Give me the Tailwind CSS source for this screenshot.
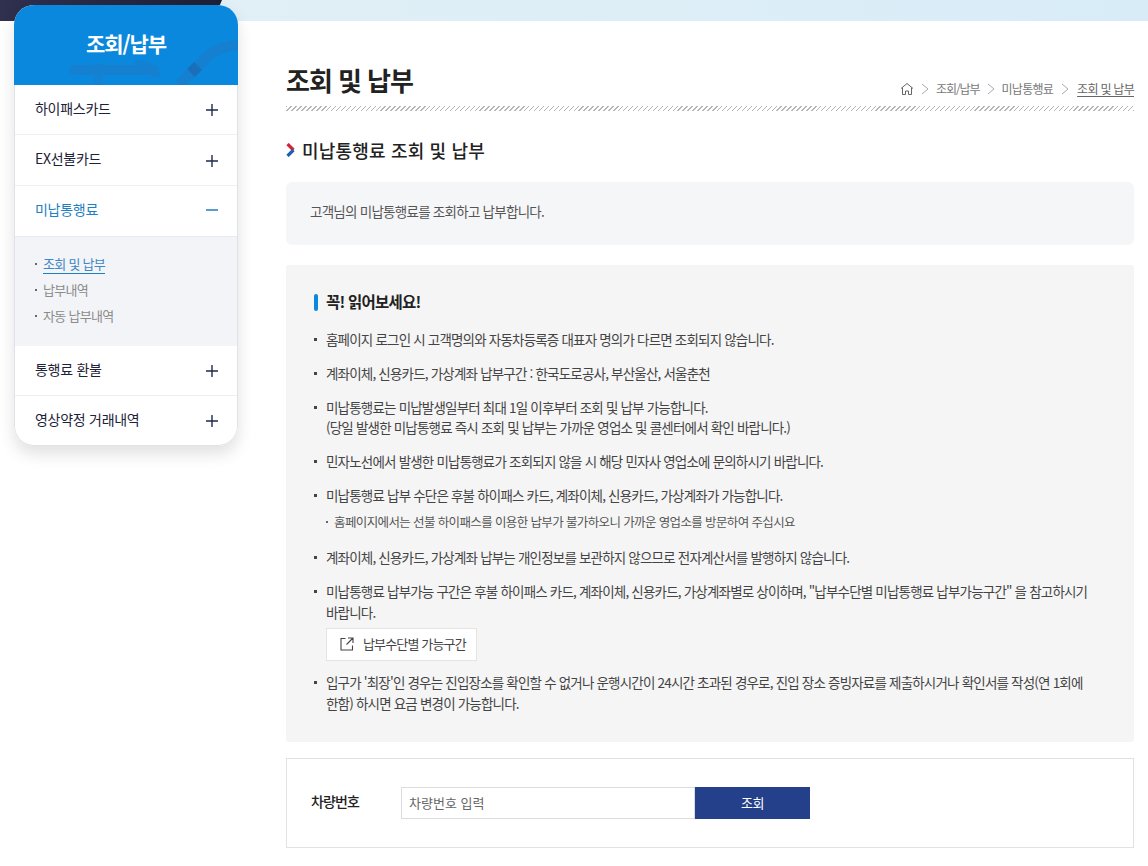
<!DOCTYPE html>
<html lang="ko">
<head>
  <meta charset="UTF-8">
  <title>조회 및 납부</title>
  <script src="https://cdn.jsdelivr.net/npm/@tailwindcss/browser@4"></script>
</head>
<body class="bg-white overflow-hidden font-['Noto_Sans_CJK_KR','Noto_Sans',sans-serif]">
  <div class="relative w-[1148px] h-[866px] overflow-hidden">
    <!-- top band -->
    <div class="absolute top-0 left-0 w-full h-[21px] bg-gradient-to-r from-[#e3f0f5] to-[#d8ecf8]"></div>
    <div class="absolute top-0 left-0 w-[222px] h-[21px] bg-gradient-to-r from-[#30304f] to-[#1d2036] [clip-path:polygon(0_0,100%_0,96%_100%,0_100%)]"></div>

    <div class="relative flex pl-[14px] pt-[5px]">
      <!-- side menu -->
      <aside class="w-[224px] h-[441px] shrink-0 rounded-[20px] bg-white shadow-[0_8px_16px_rgba(0,0,0,0.12)] overflow-hidden">
        <div class="relative h-[80px] bg-[#0a88dd] flex items-center justify-center overflow-hidden">
          <svg class="absolute left-0 top-[35px]" width="224" height="45" viewBox="0 0 224 45" fill="none" stroke="#1680d0">
            <path d="M60 30h80" stroke-width="10" stroke-linecap="round"/>
            <path d="M84 24v21M120 24c14 0 22 6 22 14" stroke-width="9" opacity="0.7"/>
            <path d="M165 45 195 15c8-6 16-9 29-10" stroke-width="11"/>
            <path d="M177 33l7-7" stroke="#1a6fb8" stroke-width="11"/>
          </svg>
          <span class="relative text-white text-[21px] font-bold tracking-[-0.05em] mt-[-2px]">조회/납부</span>
        </div>
        <div class="h-[361px] border-x border-b border-[#dfe2e6] rounded-b-[20px]">
          <div class="h-[50px] pl-[20px] pr-[19px] flex items-center justify-between border-b border-[#eceef0] text-[14px] text-[#1d2238] tracking-[-0.02em]">
            <span class="-mt-[3px]">하이패스카드</span>
            <svg width="12" height="12" viewBox="0 0 12 12" class="mt-px"><path d="M6 0v12M0 6h12" stroke="#1d2a4d" stroke-width="1.4"/></svg>
          </div>
          <div class="h-[51px] pl-[20px] pr-[19px] flex items-center justify-between border-b border-[#eceef0] text-[14px] text-[#1d2238] tracking-[-0.02em]">
            <span class="-mt-[3px]">EX선불카드</span>
            <svg width="12" height="12" viewBox="0 0 12 12" class="mt-[2px]"><path d="M6 0v12M0 6h12" stroke="#1d2a4d" stroke-width="1.4"/></svg>
          </div>
          <div class="h-[50px] pl-[20px] pr-[19px] flex items-center justify-between text-[14px] text-[#1f7fc0] tracking-[-0.02em]">
            <span class="-mt-[3px]">미납통행료</span>
            <svg width="12" height="12" viewBox="0 0 12 12" class="-mt-[2px]"><path d="M0 6h12" stroke="#1f7fc0" stroke-width="1.4"/></svg>
          </div>
          <ul class="h-[110px] bg-[#f2f4f7] border-t border-[#e8eaed] pt-[14px] pl-[20px] text-[13px] tracking-[-0.055em] text-[#8b8b8b]">
            <li class="h-[26px] flex items-center gap-[6px]">
              <span class="w-[2px] h-[2px] bg-[#666]"></span>
              <span class="text-[#3f87c5] border-b border-[#1f7fc0] leading-[18px]">조회 및 납부</span>
            </li>
            <li class="h-[26px] flex items-center gap-[6px]">
              <span class="w-[2px] h-[2px] bg-[#666]"></span>
              <span>납부내역</span>
            </li>
            <li class="h-[26px] flex items-center gap-[6px]">
              <span class="w-[2px] h-[2px] bg-[#666]"></span>
              <span>자동 납부내역</span>
            </li>
          </ul>
          <div class="h-[50px] pl-[20px] pr-[19px] flex items-center justify-between border-b border-[#eceef0] text-[14px] text-[#1d2238] tracking-[-0.02em]">
            <span class="-mt-[2px]">통행료 환불</span>
            <svg width="12" height="12" viewBox="0 0 12 12"><path d="M6 0v12M0 6h12" stroke="#1d2a4d" stroke-width="1.4"/></svg>
          </div>
          <div class="h-[49px] pl-[20px] pr-[19px] flex items-center justify-between text-[14px] text-[#1d2238] tracking-[-0.02em]">
            <span class="-mt-[2px]">영상약정 거래내역</span>
            <svg width="12" height="12" viewBox="0 0 12 12" class="mt-px"><path d="M6 0v12M0 6h12" stroke="#1d2a4d" stroke-width="1.4"/></svg>
          </div>
        </div>
      </aside>

      <!-- main -->
      <main class="w-[848px] ml-[48px] pt-[55px]">
        <div class="h-[51px] flex items-start justify-between bg-[repeating-linear-gradient(135deg,#b5b5b5_0,#b5b5b5_1px,transparent_1px,transparent_3.5px)] bg-[length:100%_5px] bg-bottom bg-no-repeat">
          <h1 class="text-[26px] leading-[40px] font-bold text-[#222] tracking-[-0.04em]">조회 및 납부</h1>
          <nav class="flex items-center text-[12px] text-[#777] tracking-[-0.06em] mt-[20px] h-[17px]">
            <svg width="14" height="14" viewBox="0 0 14 14" fill="none" stroke="#666" stroke-width="1"><path d="M1 6.5 7 1.5l6 5M2.5 5.5v7h3v-3.5h3v3.5h3v-7"/></svg>
            <svg class="mx-[7px]" width="8" height="12" viewBox="0 0 8 12" fill="none" stroke="#aaa"><path d="M1 1l6 5-6 5"/></svg>
            <span class="tracking-[-0.09em]">조회/납부</span>
            <svg class="mx-[7px]" width="8" height="12" viewBox="0 0 8 12" fill="none" stroke="#aaa"><path d="M1 1l6 5-6 5"/></svg>
            <span>미납통행료</span>
            <svg class="mx-[8px]" width="8" height="12" viewBox="0 0 8 12" fill="none" stroke="#aaa"><path d="M1 1l6 5-6 5"/></svg>
            <span class="underline underline-offset-2 text-[#666]">조회 및 납부</span>
          </nav>
        </div>

        <h2 class="flex items-center gap-[6px] mt-[25px] h-[28px] text-[18px] font-medium text-[#222] tracking-[0.01em]">
          <svg width="10" height="14" viewBox="0 0 10 14" fill="none" stroke-width="3.2"><path d="M1.5 1l6 6" stroke="#d0263c"/><path d="M7.5 7l-6 6" stroke="#1e5fae"/></svg>
          미납통행료 조회 및 납부
        </h2>

        <div class="mt-[18px] h-[63px] rounded-[6px] bg-[#f5f6f8] pl-[24px] pb-[5px] flex items-center text-[13.5px] text-[#555] tracking-[-0.055em]">고객님의 미납통행료를 조회하고 납부합니다.</div>

        <section class="mt-[20px] h-[477px] rounded-[3px] bg-[#f5f5f5] pt-[27px] pl-[28px] pr-[44px]">
          <h3 class="flex items-center gap-[8px] h-[20px] text-[15.5px] font-bold text-[#222] tracking-[-0.05em]">
            <span class="w-[4px] h-[17px] rounded-full bg-[#0a88dd]"></span>꼭! 읽어보세요!
          </h3>
          <ul class="mt-[17px] text-[13.5px] leading-[20px] text-[#444] tracking-[-0.06em]">
            <li class="flex gap-[9px]"><span class="w-[3px] h-[3px] bg-[#444] mt-[9px] shrink-0"></span><p>홈페이지 로그인 시 고객명의와 자동차등록증 대표자 명의가 다르면 조회되지 않습니다.</p></li>
            <li class="flex gap-[9px] mt-[14px]"><span class="w-[3px] h-[3px] bg-[#444] mt-[9px] shrink-0"></span><p>계좌이체, 신용카드, 가상계좌 납부구간 : 한국도로공사, 부산울산, 서울춘천</p></li>
            <li class="flex gap-[9px] mt-[14px]"><span class="w-[3px] h-[3px] bg-[#444] mt-[9px] shrink-0"></span><p>미납통행료는 미납발생일부터 최대 1일 이후부터 조회 및 납부 가능합니다.<br>(당일 발생한 미납통행료 즉시 조회 및 납부는 가까운 영업소 및 콜센터에서 확인 바랍니다.)</p></li>
            <li class="flex gap-[9px] mt-[14px]"><span class="w-[3px] h-[3px] bg-[#444] mt-[9px] shrink-0"></span><p>민자노선에서 발생한 미납통행료가 조회되지 않을 시 해당 민자사 영업소에 문의하시기 바랍니다.</p></li>
            <li class="flex gap-[9px] mt-[14px]"><span class="w-[3px] h-[3px] bg-[#444] mt-[9px] shrink-0"></span>
              <div>
                <p>미납통행료 납부 수단은 후불 하이패스 카드, 계좌이체, 신용카드, 가상계좌가 가능합니다.</p>
                <p class="flex items-center gap-[6px] mt-[8px] text-[12.5px] leading-[18px] text-[#555] tracking-[-0.05em]"><span class="w-[2px] h-[2px] bg-[#666]"></span>홈페이지에서는 선불 하이패스를 이용한 납부가 불가하오니 가까운 영업소를 방문하여 주십시요</p>
              </div>
            </li>
            <li class="flex gap-[9px] mt-[16px]"><span class="w-[3px] h-[3px] bg-[#444] mt-[9px] shrink-0"></span><p>계좌이체, 신용카드, 가상계좌 납부는 개인정보를 보관하지 않으므로 전자계산서를 발행하지 않습니다.</p></li>
            <li class="flex gap-[9px] mt-[14px]"><span class="w-[3px] h-[3px] bg-[#444] mt-[9px] shrink-0"></span>
              <div>
                <p class="leading-[21px]">미납통행료 납부가능 구간은 후불 하이패스 카드, 계좌이체, 신용카드, 가상계좌별로 상이하며, "납부수단별 미납통행료 납부가능구간" 을 참고하시기 바랍니다.</p>
                <a class="mt-[5px] w-[151px] h-[33px] bg-white border border-[#e4e4e4] flex items-center pl-[13px] gap-[9px] text-[13px] text-[#444] tracking-[-0.065em] pb-[2px]">
                  <svg width="14" height="14" viewBox="0 0 14 14" fill="none" stroke="#444" stroke-width="1.1"><path d="M5.5 1.5H1v11.5h11.5V8.5M8 1h5v5M13 1 6.5 7.5"/></svg>
                  납부수단별 가능구간
                </a>
              </div>
            </li>
            <li class="flex gap-[9px] mt-[11px]"><span class="w-[3px] h-[3px] bg-[#444] mt-[9px] shrink-0"></span><p class="leading-[21px]">입구가 '최장'인 경우는 진입장소를 확인할 수 없거나 운행시간이 24시간 초과된 경우로, 진입 장소 증빙자료를 제출하시거나 확인서를 작성(연 1회에 한함) 하시면 요금 변경이 가능합니다.</p></li>
          </ul>
        </section>

        <form class="mt-[16px] h-[90px] border border-[#e2e2e2] flex items-center pl-[24px]">
          <label class="w-[90px] text-[14px] font-medium text-[#222] tracking-[-0.06em] -mt-[3px]">차량번호</label>
          <input class="w-[294px] h-[32px] border border-[#dcdcdc] px-[7px] text-[13px] placeholder:text-[#666] -mt-[1px]" placeholder="차량번호 입력">
          <button type="button" class="w-[115px] h-[32px] bg-[#24408a] text-white text-[13px] tracking-[-0.04em] -mt-[1px]">조회</button>
        </form>
      </main>
    </div>
  </div>
</body>
</html>
